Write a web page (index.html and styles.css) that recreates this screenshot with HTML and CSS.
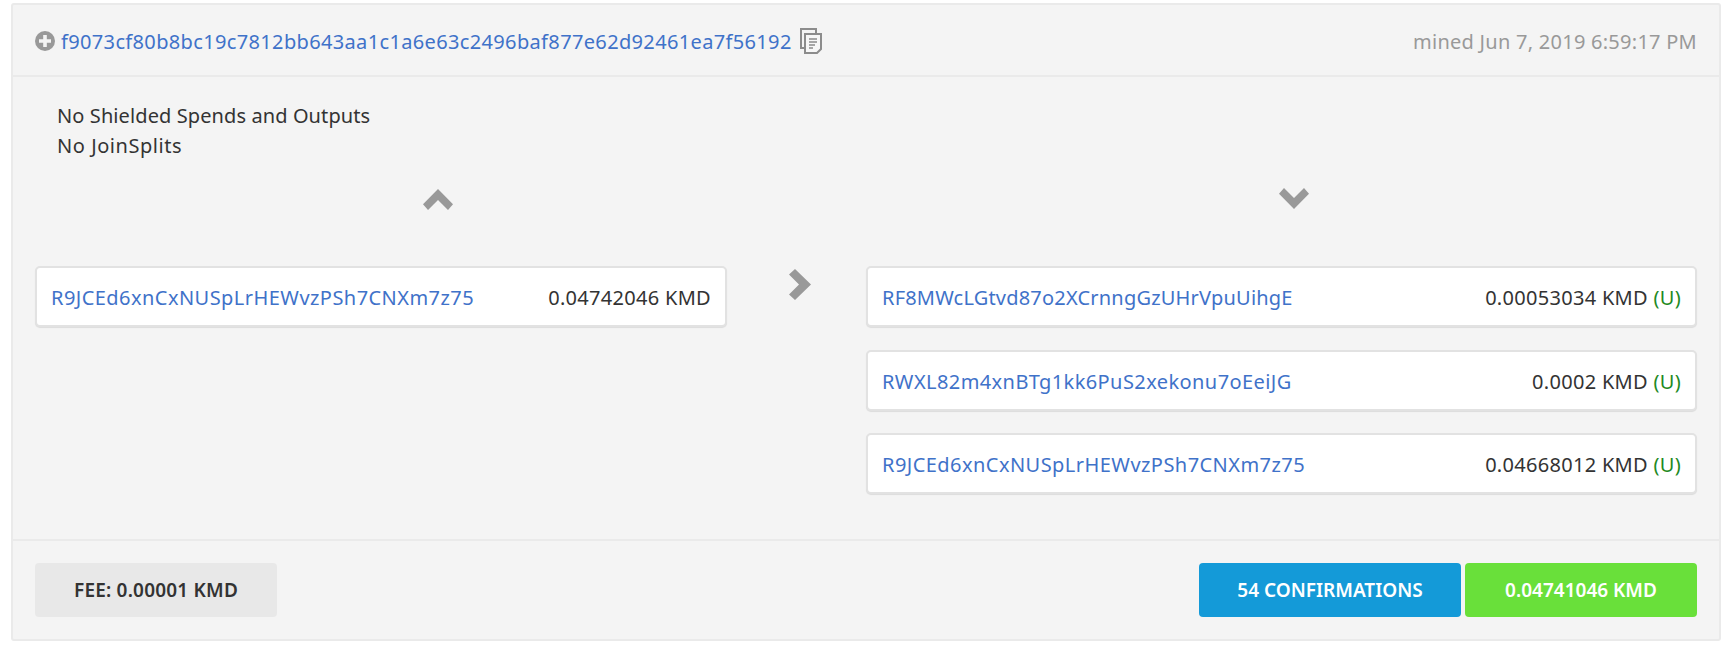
FILE: index.html
```html
<!DOCTYPE html>
<html lang="en">
<head>
<meta charset="utf-8">
<title>Transaction</title>
<link rel="stylesheet" href="styles.css">
</head>
<body>
<div class="card">
  <header class="head">
    <svg class="plus" width="20" height="20" viewBox="0 0 20 20"><circle cx="10" cy="10" r="10" fill="#999"/><path d="M8.200 4h3.600v4.200H16v3.600h-4.200V16H8.200v-4.200H4V8.200h4.200z" fill="#f4f4f4"/></svg>
    <a class="link hash">f9073cf80b8bc19c7812bb643aa1c1a6e63c2496baf877e62d92461ea7f56192</a>
    <svg class="copy" width="22" height="26" viewBox="0 0 22 26"><path d="M5 20H1V1h15v4" fill="none" stroke="#8c8c8c" stroke-width="2"/><path d="M5 6h16v15l-4 4H5z" fill="#f7f7f7" stroke="#8c8c8c" stroke-width="2"/><path d="M9 11h8M9 14h8M9 17h6M9 20h4" stroke="#8c8c8c" stroke-width="1.400"/></svg>
    <span class="mined">mined Jun 7, 2019 6:59:17 PM</span>
  </header>
  <section class="body">
    <div class="notes">
      <div>No Shielded Spends and Outputs</div>
      <div class="note-join">No JoinSplits</div>
    </div>
    <div class="dirs">
      <div class="dir dir-in"><svg width="30" height="21" viewBox="0 0 30 21"><path d="M15 0l15 15.300-5 5.700-10-10-10 10-5-5.700z" fill="#999"/></svg></div>
      <div class="dir dir-out"><svg width="30" height="21" viewBox="0 0 30 21"><path d="M15 21L0 5.700 5 0l10 10L25 0l5 5.700z" fill="#999"/></svg></div>
    </div>
    <div class="flow">
      <div class="col-in">
        <div class="row"><a class="link addr-a">R9JCEd6xnCxNUSpLrHEWvzPSh7CNXm7z75</a><span class="amt">0.04742046 KMD</span></div>
      </div>
      <div class="col-arrow"><svg width="22" height="31" viewBox="0 0 22 31"><path d="M22 15.500L6 31 0 25.500 10 15.500 0 5.500 6 0z" fill="#999"/></svg></div>
      <div class="col-out">
        <div class="row"><a class="link addr-b">RF8MWcLGtvd87o2XCrnngGzUHrVpuUihgE</a><span class="amt">0.00053034 KMD <span class="u">(U)</span></span></div>
        <div class="row"><a class="link addr-c">RWXL82m4xnBTg1kk6PuS2xekonu7oEeiJG</a><span class="amt">0.0002 KMD <span class="u">(U)</span></span></div>
        <div class="row"><a class="link addr-a">R9JCEd6xnCxNUSpLrHEWvzPSh7CNXm7z75</a><span class="amt">0.04668012 KMD <span class="u">(U)</span></span></div>
      </div>
    </div>
  </section>
  <footer class="foot">
    <div class="btn btn-fee">FEE: 0.00001 KMD</div>
    <div class="btn-group">
      <div class="btn btn-conf">54 CONFIRMATIONS</div>
      <div class="btn btn-total">0.04741046 KMD</div>
    </div>
  </footer>
</div>
</body>
</html>
```
FILE: styles.css
```css
* { box-sizing: border-box; }
html, body { margin: 0; background: #fff; }
body { padding: 3px 0 0 11px; font-family: "Noto Sans", "Open Sans", sans-serif; color: #333; font-size: 20px; }
.card { width: 1710px; height: 638px; background: #f4f4f4; border: 2px solid #eaeaea; border-radius: 3px; display: flex; flex-direction: column; }
.head { height: 72px; flex: none; border-bottom: 2px solid #eaeaea; display: flex; align-items: center; padding: 2px 22px 0 22px; }
.plus { flex: none; }
.link { color: #3f72c9; }
.hash { margin-left: 6px; font-size: 20px; letter-spacing: 0.35px; white-space: nowrap; }
.copy { flex: none; margin-left: 8px; }
.mined { margin-left: auto; color: #999; font-size: 20px; letter-spacing: 0.26px; }
.body { flex: 1; padding: 0 0 0 22px; }
.notes { padding: 24px 0 0 22px; line-height: 29.500px; font-size: 20px; letter-spacing: 0.1px; }
.note-join { letter-spacing: 0.55px; }
.dirs { display: flex; gap: 26px; margin-top: 29px; }
.dir { text-align: center; line-height: 0; flex: none; }
.dir-in { width: 806px; }
.dir-out { width: 852px; padding-left: 2px; margin-top: -1px; }
.flow { display: flex; margin-top: 56px; }
.col-in { width: 692px; flex: none; }
.col-arrow { width: 139px; flex: none; display: flex; justify-content: center; padding: 3px 0 0 6px; align-items: flex-start; }
.col-out { width: 831px; flex: none; display: flex; flex-direction: column; gap: 22.500px; }
.row { height: 61px; background: #fff; border: 2px solid #e2e2e2; border-radius: 5px; box-shadow: 0 1px 1px rgba(0,0,0,.1); display: flex; align-items: center; justify-content: space-between; padding: 2px 14px 0 14px; font-size: 20px; white-space: nowrap; }
.addr-a { letter-spacing: 0.45px; }
.addr-b { letter-spacing: 0.2px; }
.addr-c { letter-spacing: 0.42px; }
.amt { letter-spacing: 0.3px; }
.u { color: #1f8a1f; }
.foot { height: 100px; flex: none; border-top: 2px solid #eaeaea; display: flex; justify-content: space-between; padding: 22px 22px 0 22px; }
.btn { height: 54px; border-radius: 4px; display: flex; align-items: center; justify-content: center; padding-bottom: 1px; font-size: 19px; font-weight: 600; }
.btn-fee { width: 242px; background: #e8e8e8; letter-spacing: 0.2px; }
.btn-group { display: flex; gap: 4px; }
.btn-conf { width: 262px; background: #149ad8; color: #fff; }
.btn-total { width: 232px; background: #69e03a; color: #fff; }
```
